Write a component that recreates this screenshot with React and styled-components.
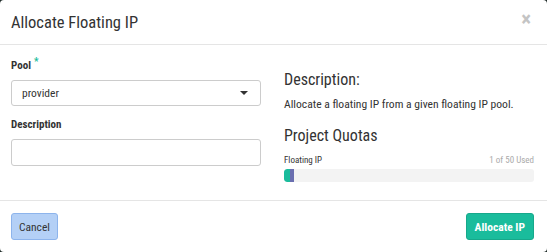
import React from 'react';
import styled, { createGlobalStyle } from 'styled-components';

const GlobalStyle = createGlobalStyle`
  html, body {
    margin: 0;
    padding: 0;
    background: #1f2b28;
  }
  body {
    font-family: "Roboto Condensed", "Liberation Sans Narrow", "DejaVu Sans Condensed", sans-serif;
    color: #333;
  }
`;

const Modal = styled.div`
  width: 547px;
  height: 252px;
  background: #fff;
  border-radius: 4px;
  display: flex;
  flex-direction: column;
  overflow: hidden;
`;

const Header = styled.div`
  height: 45px;
  box-sizing: border-box;
  padding: 0 16px 0 11px;
  border-bottom: 1px solid #e5e5e5;
  display: flex;
  align-items: center;
  justify-content: space-between;
`;

const Title = styled.h4`
  margin: 0;
  font-size: 16.5px;
  font-weight: 400;
  color: #333;
`;

const Close = styled.span`
  font-size: 21px;
  font-weight: 700;
  color: #c4c4c4;
  line-height: 1;
  margin-top: -6px;
`;

const Body = styled.div`
  flex: 1;
  display: grid;
  grid-template-columns: 250px 250px;
  column-gap: 23px;
  padding: 0 13px 0 11px;
  border-bottom: 1px solid #e5e5e5;
`;

const Column = styled.div`
  display: flex;
  flex-direction: column;
`;

const Label = styled.label`
  font-size: 11px;
  font-weight: 700;
  color: #333;
  margin-top: ${({ $top }) => $top}px;
  margin-bottom: 8px;
  line-height: 13px;
`;

const Required = styled.span`
  color: #1abc9c;
  font-size: 10px;
  vertical-align: top;
  margin-left: 3px;
  position: relative;
  top: -4px;
`;

const Select = styled.div`
  height: 26px;
  box-sizing: border-box;
  border: 1px solid #ccc;
  border-radius: 3px;
  padding: 0 12px 0 10px;
  display: flex;
  align-items: center;
  justify-content: space-between;
  font-size: 11.5px;
  color: #333;
`;

const Caret = styled.span`
  width: 0;
  height: 0;
  border-left: 4px solid transparent;
  border-right: 4px solid transparent;
  border-top: 4px solid #333;
`;

const Input = styled.input`
  height: 27px;
  box-sizing: border-box;
  border: 1px solid #ccc;
  border-radius: 3px;
  font-family: inherit;
  font-size: 11px;
  outline: none;
`;

const Heading = styled.h3`
  margin: ${({ $top }) => $top}px 0 0;
  font-size: 16px;
  font-weight: 400;
  line-height: 18px;
  color: #333;
`;

const Text = styled.p`
  margin: 9px 0 0;
  font-size: 11.6px;
  line-height: 13px;
  color: #333;
`;

const QuotaRow = styled.div`
  display: flex;
  justify-content: space-between;
  align-items: baseline;
  margin-top: 10px;
  font-size: 9px;
  line-height: 11px;
`;

const QuotaName = styled.span`
  color: #333;
`;

const QuotaUsed = styled.span`
  color: #aaa;
`;

const Bar = styled.div`
  margin-top: 3px;
  height: 13px;
  background: #f3f3f3;
  border-radius: 3px;
  display: flex;
  overflow: hidden;
`;

const Segment = styled.div`
  height: 100%;
  background: ${({ $color }) => $color};
  border-radius: ${({ $first }) => ($first ? '3px 0 0 3px' : '0')};
`;

const Footer = styled.div`
  height: 51px;
  box-sizing: border-box;
  padding: 12px 13px 0 11px;
  display: flex;
  justify-content: space-between;
  align-items: flex-start;
`;

const Button = styled.button`
  height: 27px;
  box-sizing: border-box;
  padding: 0 ${({ $pad }) => $pad}px;
  border-radius: 3px;
  font-family: inherit;
  font-size: 11.5px;
  cursor: pointer;
  border: 1px solid ${({ $primary }) => ($primary ? '#17a88b' : '#8db4ec')};
  background: ${({ $primary }) => ($primary ? '#1abc9c' : '#b4d0f6')};
  color: ${({ $primary }) => ($primary ? '#fff' : '#333')};
  font-weight: ${({ $primary }) => ($primary ? 700 : 400)};
`;

export default function App() {
  const used = 1;
  const total = 50;
  return (
    <>
      <GlobalStyle />
      <Modal>
        <Header>
          <Title>Allocate Floating IP</Title>
          <Close>×</Close>
        </Header>
        <Body>
          <Column>
            <Label $top={14}>
              Pool<Required>*</Required>
            </Label>
            <Select>
              provider
              <Caret />
            </Select>
            <Label $top={12}>Description</Label>
            <Input />
          </Column>
          <Column>
            <Heading $top={26}>Description:</Heading>
            <Text>Allocate a floating IP from a given floating IP pool.</Text>
            <Heading $top={16}>Project Quotas</Heading>
            <QuotaRow>
              <QuotaName>Floating IP</QuotaName>
              <QuotaUsed>
                {used} of {total} Used
              </QuotaUsed>
            </QuotaRow>
            <Bar>
              <Segment $first $color="#1abc9c" style={{ width: `${(used / total) * 100 * 1.2}%` }} />
              <Segment $color="#6a6fb0" style={{ width: '4px' }} />
            </Bar>
          </Column>
        </Body>
        <Footer>
          <Button $pad={7}>Cancel</Button>
          <Button $primary $pad={8}>Allocate IP</Button>
        </Footer>
      </Modal>
    </>
  );
}
